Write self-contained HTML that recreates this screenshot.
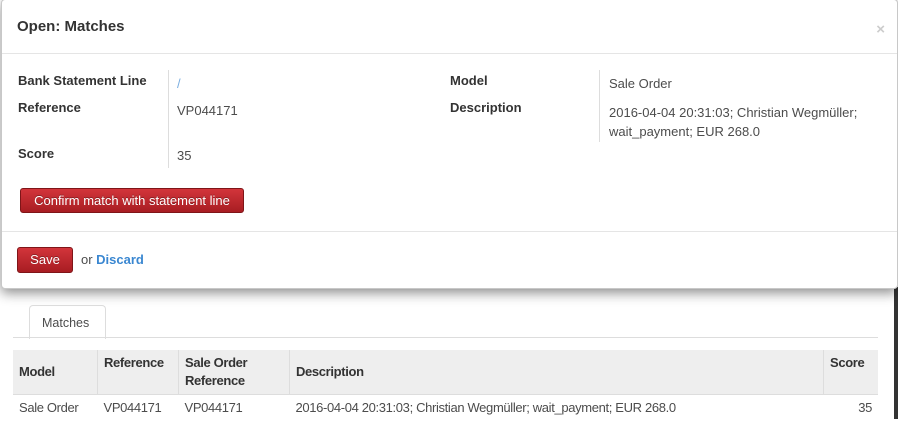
<!DOCTYPE html>
<html><head><style>
body{margin:0;width:898px;height:419px;overflow:hidden;background:#fff;font-family:"Liberation Sans",sans-serif;font-size:13px;color:#4c4c4c;position:relative}
.modal{position:absolute;left:1px;top:-1px;width:895px;height:288px;background:#fff;border:1px solid #c8c8c8;border-radius:4px;box-shadow:0 4px 12px rgba(0,0,0,.45);z-index:2}
.hdr{height:53px;border-bottom:1px solid #e5e5e5;position:relative}
.hdr h3{margin:0;position:absolute;left:15px;top:18px;font-size:15px;font-weight:bold;color:#333}
.x{position:absolute;right:12px;top:21px;color:#ccc;font-size:15px;font-weight:bold}
.lbl{position:absolute;font-weight:bold;color:#333}
.val{position:absolute}
.vline{position:absolute;width:1px;background:#ddd}
.btn{position:absolute;background:linear-gradient(#d2353b,#a81d22);border:1px solid #7f1518;border-radius:3px;color:#fff;text-shadow:0 -1px 0 rgba(0,0,0,.3)}
.sep{position:absolute;left:0;right:0;top:231px;border-top:1px solid #e5e5e5}
.tab{position:absolute;left:29px;top:305px;width:75px;height:33px;border:1px solid #ddd;border-bottom:none;border-radius:4px 4px 0 0;background:#fff;font-size:12.5px}
.tabline{position:absolute;left:13px;top:337px;width:865px;border-top:1px solid #ddd}
table{position:absolute;left:13px;top:350px;width:865px;table-layout:fixed;border-collapse:collapse;font-size:13px;letter-spacing:-.35px}
th{background:#eee;text-align:left;vertical-align:middle;padding:4px 6px;color:#333;border-right:1px solid #ddd;border-bottom:1px solid #ddd;line-height:18px;height:33px}
td{padding:5px 6px;line-height:16px}
</style></head><body>
<div class="modal">
<div class="hdr"><h3>Open: Matches</h3><span class="x">×</span></div>
<div class="lbl" style="left:16px;top:73px">Bank Statement Line</div>
<div class="lbl" style="left:16px;top:100px">Reference</div>
<div class="lbl" style="left:16px;top:146px">Score</div>
<div class="vline" style="left:166px;top:70px;height:98px"></div>
<div class="val" style="left:175px;top:76px;color:#7aaee0">/</div>
<div class="val" style="left:175px;top:103px">VP044171</div>
<div class="val" style="left:175px;top:148px">35</div>
<div class="lbl" style="left:448px;top:73px">Model</div>
<div class="lbl" style="left:448px;top:100px">Description</div>
<div class="vline" style="left:597px;top:70px;height:72px"></div>
<div class="val" style="left:607px;top:76px">Sale Order</div>
<div class="val" style="left:607px;top:103px;line-height:19px">2016-04-04 20:31:03; Christian Wegmüller;<br>wait_payment; EUR 268.0</div>
<div class="btn" style="left:18px;top:188px;width:222px;height:23px;line-height:23px;text-align:center">Confirm match with statement line</div>
<div class="sep"></div>
<div class="btn" style="left:15px;top:247px;width:54px;height:24px;line-height:24px;text-align:center">Save</div>
<div class="val" style="left:79px;top:252px">or <b style="color:#3a87d1">Discard</b></div>
</div>
<div style="position:absolute;right:0;top:287px;width:4px;height:132px;background:#333"></div>
<div class="tab"><div style="position:absolute;left:12px;top:10px">Matches</div></div>
<div class="tabline"></div>
<table>
<tr><th style="width:72px">Model</th><th style="width:68px;vertical-align:top">Reference</th><th style="width:98px">Sale Order<br>Reference</th><th>Description</th><th style="width:42px;border-right:none;vertical-align:top">Score</th></tr>
<tr><td>Sale Order</td><td>VP044171</td><td>VP044171</td><td>2016-04-04 20:31:03; Christian Wegmüller; wait_payment; EUR 268.0</td><td style="text-align:right">35</td></tr>
</table>
</body></html>
